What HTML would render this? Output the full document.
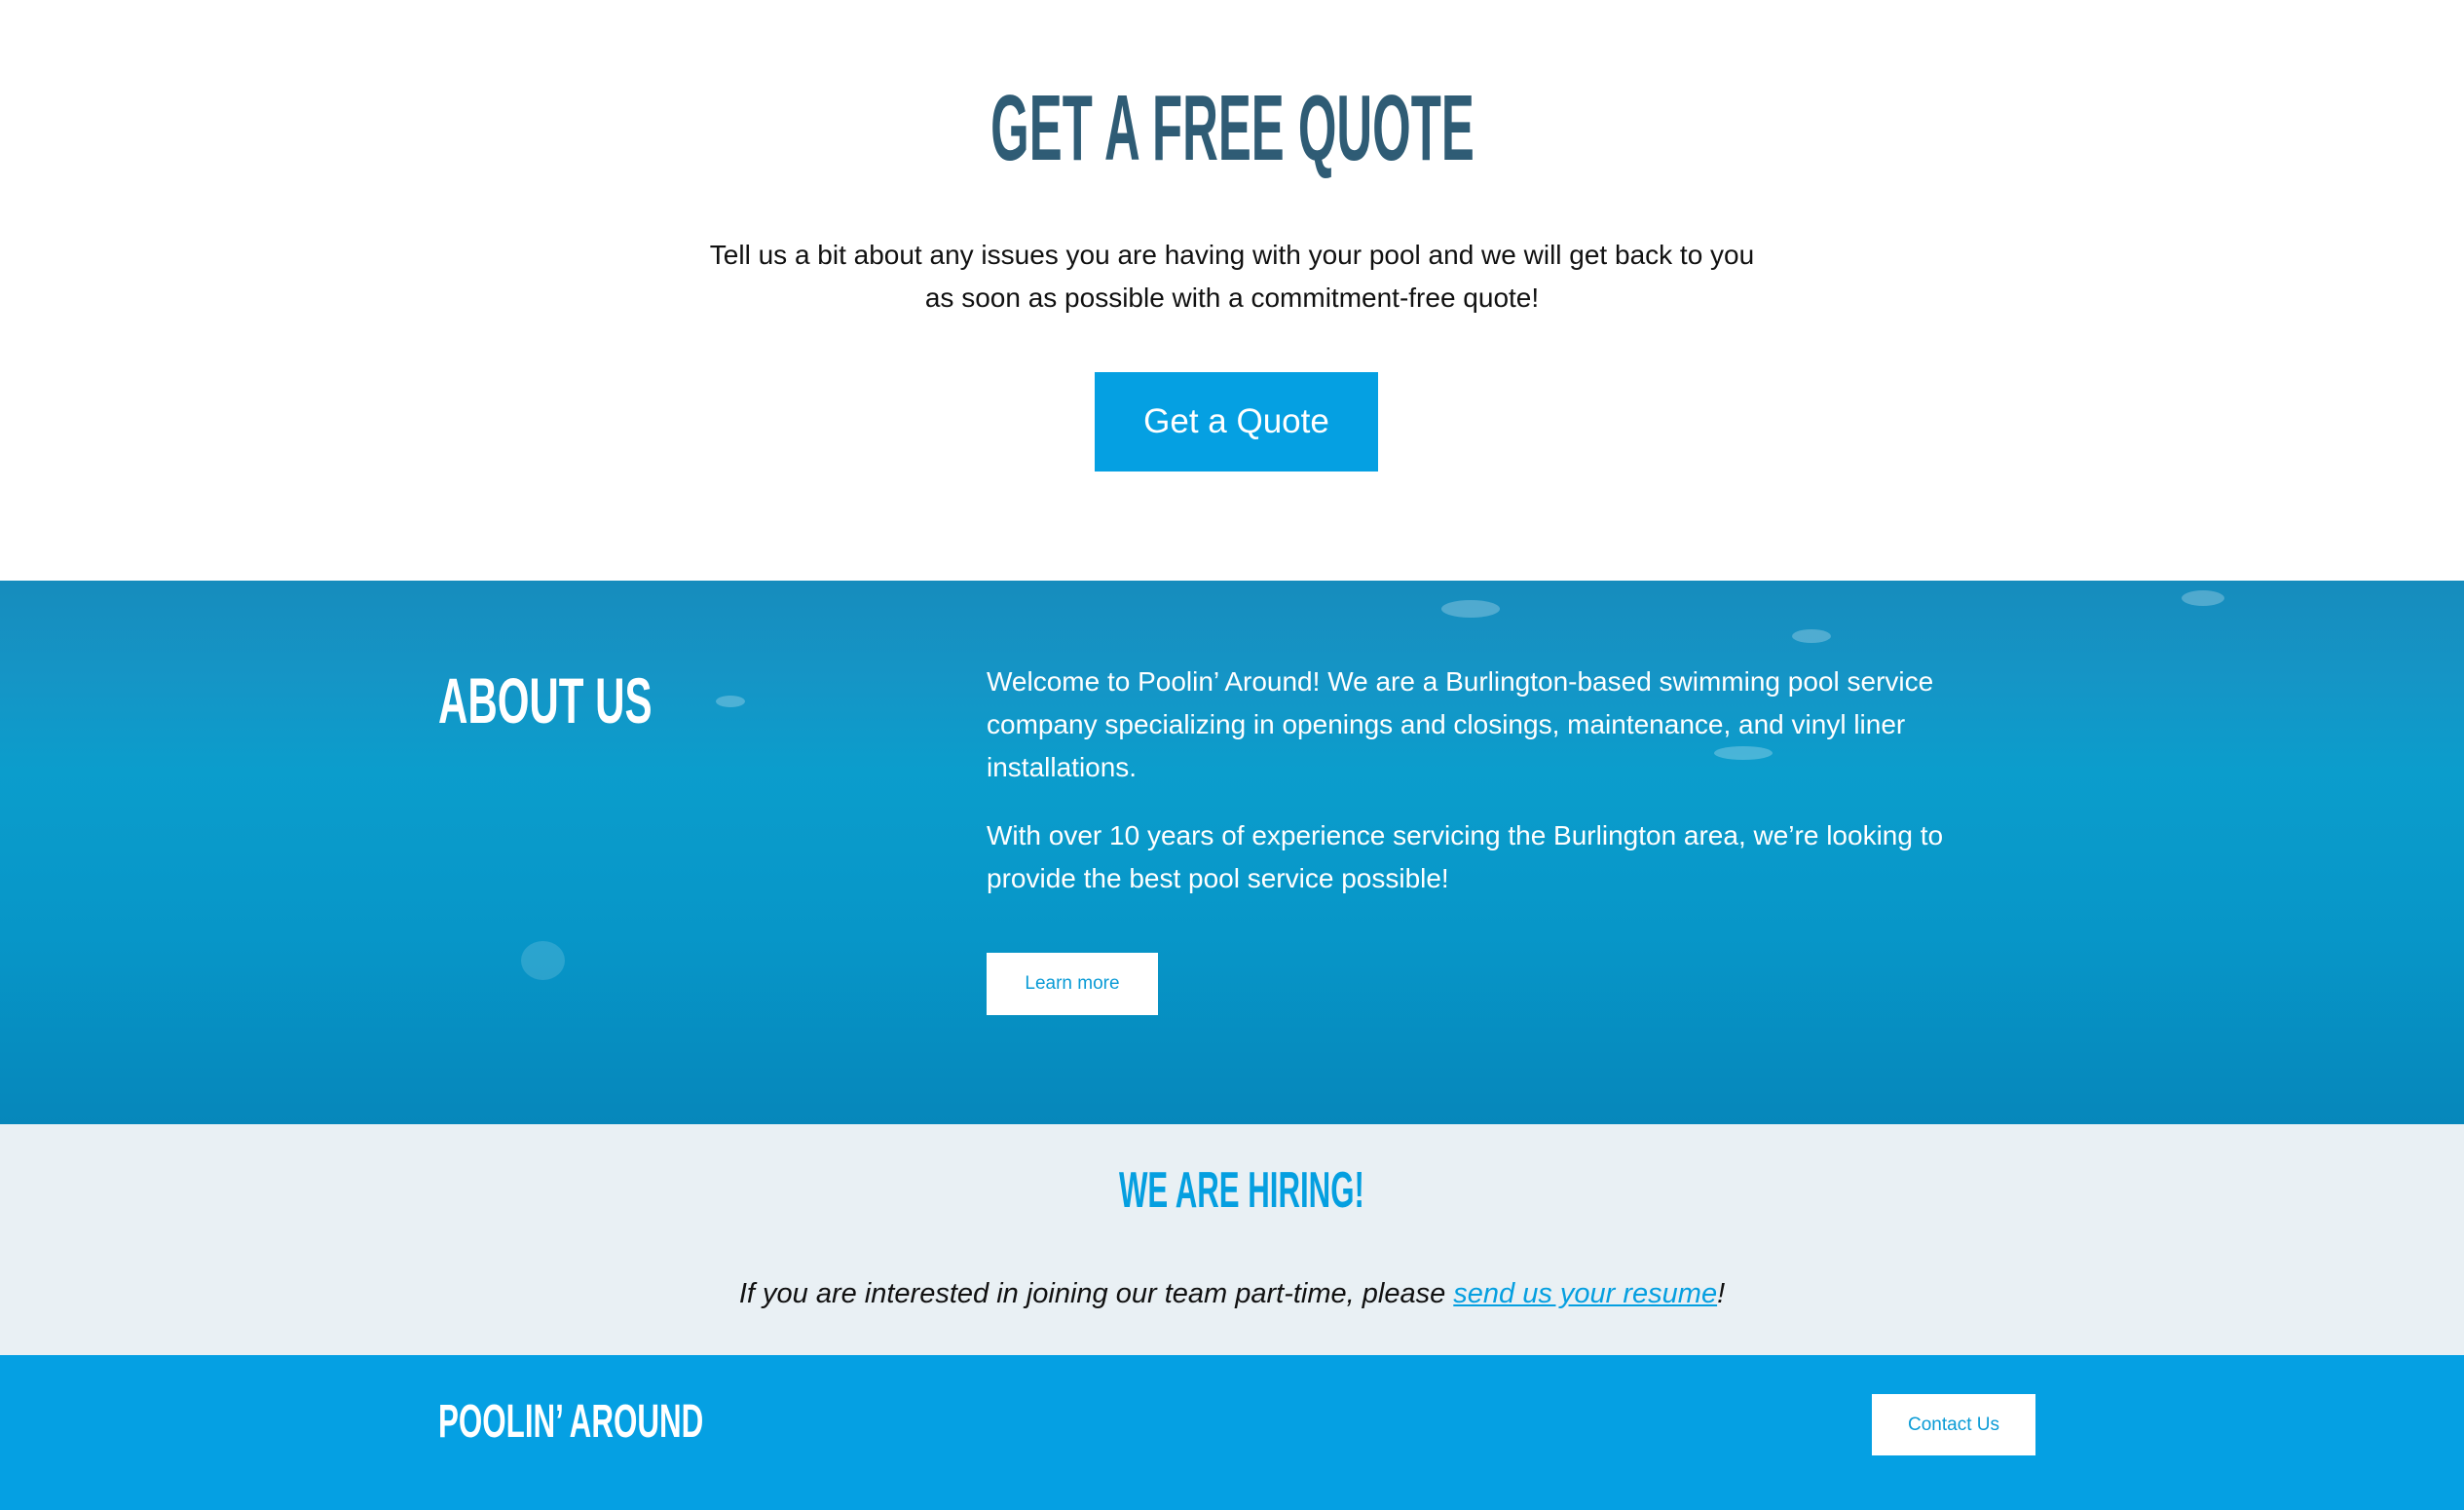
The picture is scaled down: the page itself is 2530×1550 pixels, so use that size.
<!DOCTYPE html>
<html><head><meta charset="utf-8"><style>
*{margin:0;padding:0;box-sizing:border-box}
body{width:2530px;height:1550px;overflow:hidden;font-family:"Liberation Sans",sans-serif;background:#fff;position:relative}
.cond{font-family:"Liberation Sans",sans-serif;font-weight:bold;display:inline-block;white-space:nowrap}
.hc{position:absolute;left:0;width:2530px;text-align:center}
h1{top:82px;left:4px}
h1 .cond{color:#2f5c75;font-size:96px;line-height:100px;transform:scaleX(0.53);transform-origin:center}
.p1{position:absolute;left:0;width:2530px;top:240px;text-align:center;font-size:28px;line-height:44px;color:#111}
.btn1{position:absolute;left:1124px;top:382px;width:291px;height:102px;background:#05a0e2;color:#fff;font-size:35px;text-align:center;line-height:102px}
.about{position:absolute;left:0;top:596px;width:2530px;height:558px;background:linear-gradient(180deg,#168cbd 0%,#1595c6 18%,#0b9dcc 35%,#0796c8 65%,#0687bb 100%);overflow:hidden}
.about h2{position:absolute;left:450px;top:88px;color:#fff;font-size:66px;line-height:70px;transform:scaleX(0.637);transform-origin:left}
.about .t{position:absolute;left:1013px;top:82px;width:1020px;color:#fff;font-size:28px;line-height:44px}
.about .t p{margin-bottom:26px}
.lm{position:absolute;left:1013px;top:382px;width:176px;height:64px;background:#fff;color:#0a9bd6;font-size:19px;text-align:center;line-height:64px}
.hire{position:absolute;left:0;top:1154px;width:2530px;height:237px;background:#e9f0f4}
.hire h3{top:38px;left:10px}
.hire h3 .cond{color:#059fe0;font-size:52px;line-height:60px;transform:scaleX(0.60)}
.hire .i{position:absolute;left:0;width:2530px;top:154px;text-align:center;font-style:italic;font-size:29px;line-height:40px;color:#111}
.hire a{color:#059fe0;text-decoration:underline}
.foot{position:absolute;left:0;top:1391px;width:2530px;height:159px;background:#05a0e3}
.foot h4{position:absolute;left:450px;top:42px;color:#fff;font-size:48px;line-height:54px;transform:scaleX(0.653);transform-origin:left}
.cu{position:absolute;left:1922px;top:40px;width:168px;height:63px;background:#fff;color:#0a9bd6;font-size:19px;text-align:center;line-height:63px}
.b{position:absolute;border-radius:50%;background:rgba(255,255,255,.25)}
</style></head><body>
<h1 class="hc"><span class="cond">GET A FREE QUOTE</span></h1>
<div class="p1">Tell us a bit about any issues you are having with your pool and we will get back to you<br>as soon as possible with a commitment-free quote!</div>
<div class="btn1">Get a Quote</div>
<div class="about">
<div class="b" style="left:1480px;top:20px;width:60px;height:18px"></div>
<div class="b" style="left:1840px;top:50px;width:40px;height:14px"></div>
<div class="b" style="left:2240px;top:10px;width:44px;height:16px"></div>
<div class="b" style="left:1760px;top:170px;width:60px;height:14px"></div>
<div class="b" style="left:535px;top:370px;width:45px;height:40px;background:rgba(255,255,255,.15)"></div>
<div class="b" style="left:735px;top:118px;width:30px;height:12px"></div>
<h2 class="cond">ABOUT US</h2>
<div class="t"><p>Welcome to Poolin’ Around! We are a Burlington-based swimming pool service company specializing in openings and closings, maintenance, and vinyl liner installations.</p><p>With over 10 years of experience servicing the Burlington area, we’re looking to provide the best pool service possible!</p></div>
<div class="lm">Learn more</div>
</div>
<div class="hire">
<h3 class="hc"><span class="cond">WE ARE HIRING!</span></h3>
<div class="i">If you are interested in joining our team part-time, please <a>send us your resume</a>!</div>
</div>
<div class="foot">
<h4 class="cond">POOLIN’ AROUND</h4>
<div class="cu">Contact Us</div>
</div>
</body></html>
